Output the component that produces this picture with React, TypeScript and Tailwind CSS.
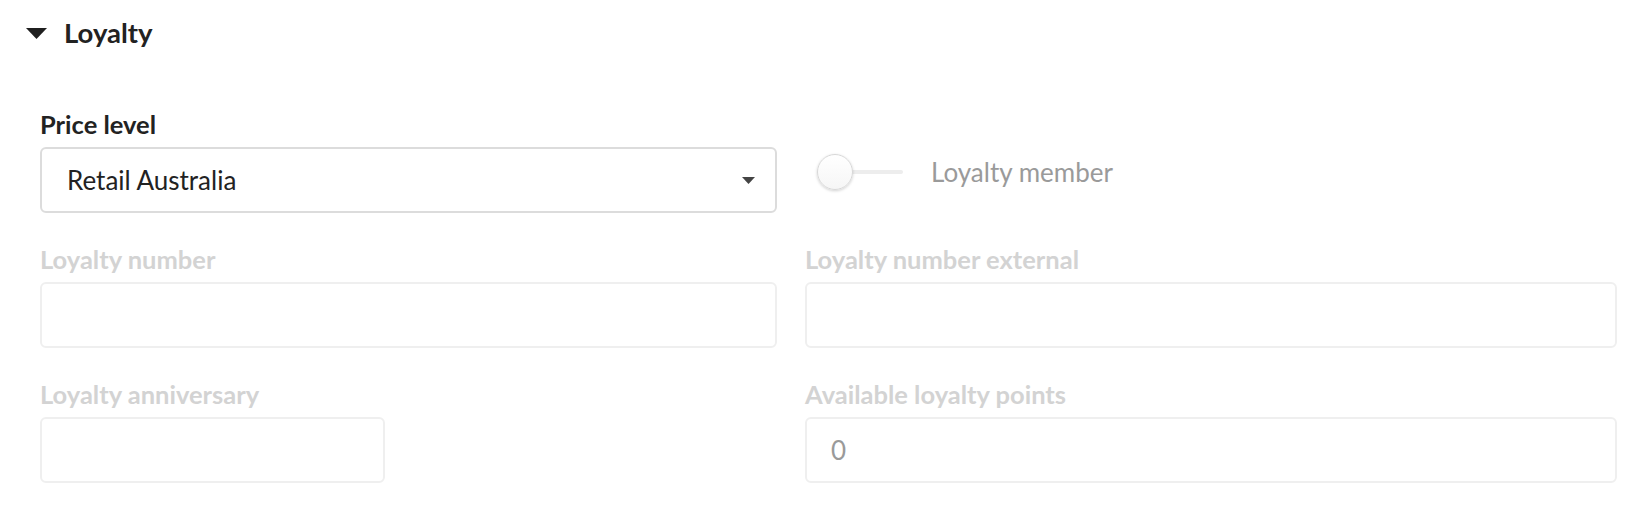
import React from 'react';

/**
 * Collapsible "Loyalty" section of a customer form.
 */
function Field({
  label,
  disabled = false,
  className = '',
  children,
}: {
  label: string;
  disabled?: boolean;
  className?: string;
  children?: React.ReactNode;
}) {
  return (
    <div className={`flex flex-col ${className}`}>
      <label
        className={`text-[25.5px] leading-[28px] font-bold mb-[9px] ${
          disabled ? 'text-[#d3d3d3]' : 'text-[#222222]'
        }`}
      >
        {label}
      </label>
      {children}
    </div>
  );
}

function TextBox({ value = '', className = '' }: { value?: string; className?: string }) {
  return (
    <div
      className={`h-[66px] rounded-[6px] border-2 border-[#efefef] bg-white flex items-center pl-[24px] text-[26px] text-[#9a9a9a] ${className}`}
    >
      {value}
    </div>
  );
}

export default function App() {
  return (
    <div
      className="w-[1645px] h-[516px] bg-white overflow-hidden"
      style={{ fontFamily: 'Lato, "Open Sans", sans-serif' }}
    >
      {/* Section header */}
      <div className="flex items-center h-[66px] pl-[26px]">
        <svg width="21" height="11" viewBox="0 0 21 11" className="mr-[17px]">
          <path d="M0 0 H21 L10.5 11 Z" fill="#1f1f1f" />
        </svg>
        <span className="text-[27.5px] font-bold text-[#222222]">Loyalty</span>
      </div>

      {/* Form grid */}
      <div className="grid grid-cols-[737px_812px] gap-x-[28px] gap-y-[32px] pl-[40px] pt-[44px]">
        {/* Price level */}
        <Field label="Price level">
          <div className="h-[66px] rounded-[6px] border-2 border-[#dcdcdc] bg-white flex items-center justify-between pl-[25px] pr-[20px]">
            <span className="text-[26px] text-[#222222]">Retail Australia</span>
            <svg width="13" height="7" viewBox="0 0 13 7">
              <path d="M0 0 H13 L6.5 7 Z" fill="#444444" />
            </svg>
          </div>
        </Field>

        {/* Loyalty member toggle */}
        <div className="self-start mt-[44px] h-[36px] flex items-center">
          <div className="relative ml-[12px] w-[86px] h-[36px] flex items-center">
            <div className="absolute left-[10px] right-0 h-[4px] rounded-full bg-[#ededed]" />
            <div className="absolute left-0 top-0 w-[36px] h-[36px] rounded-full border border-[#d8d8d8] bg-gradient-to-b from-white to-[#f6f6f6] shadow-[0_1px_3px_rgba(0,0,0,0.18)]" />
          </div>
          <span className="ml-[28px] text-[26px] text-[#9a9a9a]">Loyalty member</span>
        </div>

        <Field label="Loyalty number" disabled>
          <TextBox />
        </Field>
        <Field label="Loyalty number external" disabled>
          <TextBox />
        </Field>

        <Field label="Loyalty anniversary" disabled>
          <TextBox className="w-[345px]" />
        </Field>
        <Field label="Available loyalty points" disabled>
          <TextBox value="0" />
        </Field>
      </div>
    </div>
  );
}
